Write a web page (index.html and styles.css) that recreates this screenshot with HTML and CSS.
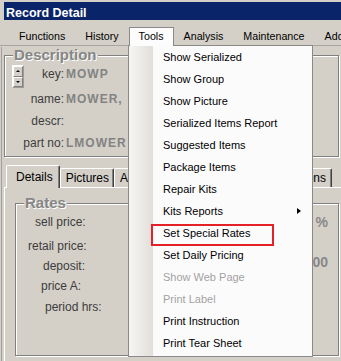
FILE: index.html
```html
<!DOCTYPE html>
<html>
<head>
<meta charset="utf-8">
<title>Record Detail</title>
<link rel="stylesheet" href="styles.css">
</head>
<body>
<div class="window">
  <div class="titlebar">Record Detail</div>
  <div class="menubar">
    <span class="menu-item">Functions</span>
    <span class="menu-item">History</span>
    <span class="menu-item active">Tools</span>
    <span class="menu-item">Analysis</span>
    <span class="menu-item">Maintenance</span>
    <span class="menu-item">Add</span>
  </div>
  <div class="client">
    <fieldset class="group desc">
      <legend>Description</legend>
      <div class="fields">
        <div class="label key-label">
          <span class="spinner"><span class="spin-btn"><span class="tri-up"></span></span><span class="spin-btn"><span class="tri-down"></span></span></span>
          <span>key:</span>
        </div>
        <div class="value">MOWP</div>
        <div class="label gap-top">name:</div>
        <div class="value gap-top">MOWER,</div>
        <div class="label">descr:</div>
        <div class="value"></div>
        <div class="label">part no:</div>
        <div class="value">LMOWER</div>
      </div>
    </fieldset>
    <div class="tabs">
      <div class="tab selected">Details</div>
      <div class="tab">Pictures</div>
      <div class="tab">Acc</div>
      <div class="tab last">Options</div>
    </div>
    <div class="tab-panel">
      <fieldset class="group rates">
        <legend>Rates</legend>
        <div class="rate-row r1"><span class="rlabel">sell price:</span><span class="rvalue">%</span></div>
        <div class="rate-row r2"><span class="rlabel">retail price:</span></div>
        <div class="rate-row r3"><span class="rlabel">deposit:</span><span class="rvalue up">00</span></div>
        <div class="rate-row r4"><span class="rlabel">price A:</span></div>
        <div class="rate-row r5"><span class="rlabel">period hrs:</span></div>
      </fieldset>
    </div>
  </div>
  <div class="dropdown">
    <div class="dd-item">Show Serialized</div>
    <div class="dd-item">Show Group</div>
    <div class="dd-item">Show Picture</div>
    <div class="dd-item">Serialized Items Report</div>
    <div class="dd-item">Suggested Items</div>
    <div class="dd-item">Package Items</div>
    <div class="dd-item">Repair Kits</div>
    <div class="dd-item">Kits Reports<span class="arrow"></span></div>
    <div class="dd-item">Set Special Rates</div>
    <div class="dd-item">Set Daily Pricing</div>
    <div class="dd-item disabled">Show Web Page</div>
    <div class="dd-item disabled">Print Label</div>
    <div class="dd-item">Print Instruction</div>
    <div class="dd-item">Print Tear Sheet</div>
    <div class="highlight-box"></div>
  </div>
</div>
</body>
</html>
```
FILE: styles.css
```css
* { box-sizing: border-box; }
html, body { margin: 0; padding: 0; }
body {
  width: 341px;
  height: 361px;
  overflow: hidden;
  background: #d4d0c8;
  font-family: "Liberation Sans", Arial, sans-serif;
}
.window {
  position: relative;
  width: 341px;
  height: 361px;
  overflow: hidden;
  background: #d4d0c8;
}
.titlebar {
  margin: 2px 0 0 4px;
  height: 18px;
  background: #0a246a;
  color: #fff;
  font-weight: bold;
  font-size: 12.5px;
  line-height: 13px;
  padding: 5px 0 0 2px;
}
.menubar {
  display: flex;
  height: 26px;
  padding: 7px 0 0 9px;
  border-bottom: 1px solid #a8a5a0;
  font-size: 10.7px;
  white-space: nowrap;
}
.menu-item {
  padding: 0 10px;
  height: 18px;
  line-height: 18px;
  color: #000;
}
.menu-item.active {
  position: relative;
  z-index: 2;
  height: 19px;
  padding: 0 9px;
  background: #fcfcfc;
  border: 1px solid #8a8a8a;
  border-bottom: none;
  line-height: 17px;
}
.client {
  margin-left: 1px;
  border-left: 1px solid #a0a0a0;
  height: 315px;
}
.group {
  margin: 0;
  padding: 0;
  border: 1px solid #808080;
  box-shadow: inset 1px 1px 0 #fff, 1px 1px 0 #fff;
  min-width: 0;
}
.group legend {
  margin-left: 8px;
  padding: 0 1px;
  font-size: 15px;
  font-weight: bold;
  line-height: 16px;
  color: #868686;
  text-shadow: 1px 1px 0 #fff;
  background: #d4d0c8;
}
.desc {
  margin: 1px 2px 0 2px;
  padding-bottom: 2px;
}
.fields {
  display: grid;
  grid-template-columns: 59px 1fr;
  grid-template-rows: 22px 25px 22px 22px;
  column-gap: 2px;
  font-size: 12px;
}
.label {
  text-align: right;
  line-height: 22px;
  color: #3c3c3c;
}
.value {
  line-height: 22px;
  font-weight: bold;
  letter-spacing: 1px;
  color: #838383;
  white-space: nowrap;
}
.gap-top { align-self: end; }
.key-label {
  display: flex;
  align-items: flex-start;
  justify-content: space-between;
}
.spinner {
  margin: 2px 0 0 7px;
  width: 12px;
  height: 23px;
  border: 1px solid #fff;
  border-right-color: #9c9c9c;
  border-bottom-color: #9c9c9c;
  display: flex;
  flex-direction: column;
}
.spin-btn {
  flex: 1;
  background: #d4d0c8;
  border: 1px solid #808080;
  border-top-color: #fff;
  border-left-color: #fff;
  display: flex;
  align-items: center;
  justify-content: center;
}
.tri-up, .tri-down {
  width: 0;
  height: 0;
  border-left: 2px solid transparent;
  border-right: 2px solid transparent;
}
.tri-up { border-bottom: 2px solid #000; }
.tri-down { border-top: 2px solid #000; }
.tabs {
  display: flex;
  align-items: flex-end;
  margin: 8px 9px 0 3px;
  height: 22px;
  font-size: 12px;
  color: #000;
}
.tab {
  height: 19px;
  padding: 0 4px 0 5px;
  line-height: 19px;
  border-top: 1px solid #fff;
  border-left: 1px solid #fff;
  border-right: 1px solid #404040;
  box-shadow: inset -1px 0 0 #808080;
  border-radius: 2px 2px 0 0;
  background: #d4d0c8;
  white-space: nowrap;
}
.tab.selected {
  position: relative;
  z-index: 1;
  height: 23px;
  margin-left: 1px;
  margin-bottom: -1px;
  padding: 0 6px 0 9px;
  line-height: 22px;
}
.tab.last { margin-left: auto; padding-right: 5px; }
.tab-panel {
  margin-left: 2px;
  height: 180px;
  border-top: 1px solid #fff;
  border-left: 1px solid #fff;
  padding: 7px 0 0 10px;
}
.rates {
  height: 161px;
  margin-right: 2px;
}
.rate-row {
  display: flex;
  height: 20px;
  line-height: 20px;
  font-size: 12px;
  color: #3c3c3c;
  padding-right: 10px;
}
.rvalue {
  margin-left: auto;
  font-weight: bold;
  font-size: 14px;
  color: #888;
}
.rvalue.up { margin-top: -4px; }
.r1 { margin-top: 1px; padding-left: 19px; }
.r2 { margin-top: 4px; padding-left: 12px; }
.r3 { padding-left: 27px; }
.r4 { padding-left: 25px; }
.r5 { margin-top: 1px; padding-left: 29px; }
.dropdown {
  position: absolute;
  z-index: 1;
  left: 128px;
  top: 45px;
  width: 185px;
  height: 312px;
  border: 1px solid #8a8a8a;
  background: linear-gradient(to right, #f6f5f3 0, #e2dfda 24px, #fcfbfc 24px);
  font-size: 11px;
}
.dd-item {
  display: flex;
  height: 22px;
  line-height: 22px;
  padding-left: 34px;
  color: #000;
  white-space: nowrap;
}
.dd-item.disabled { color: #a2a2a2; }
.arrow {
  margin: 8px 11px 0 auto;
  width: 0;
  height: 0;
  border-left: 4px solid #000;
  border-top: 3.5px solid transparent;
  border-bottom: 3.5px solid transparent;
}
.highlight-box {
  position: absolute;
  left: 22px;
  top: 178px;
  width: 123px;
  height: 22px;
  border: 2px solid #e52128;
}
```
